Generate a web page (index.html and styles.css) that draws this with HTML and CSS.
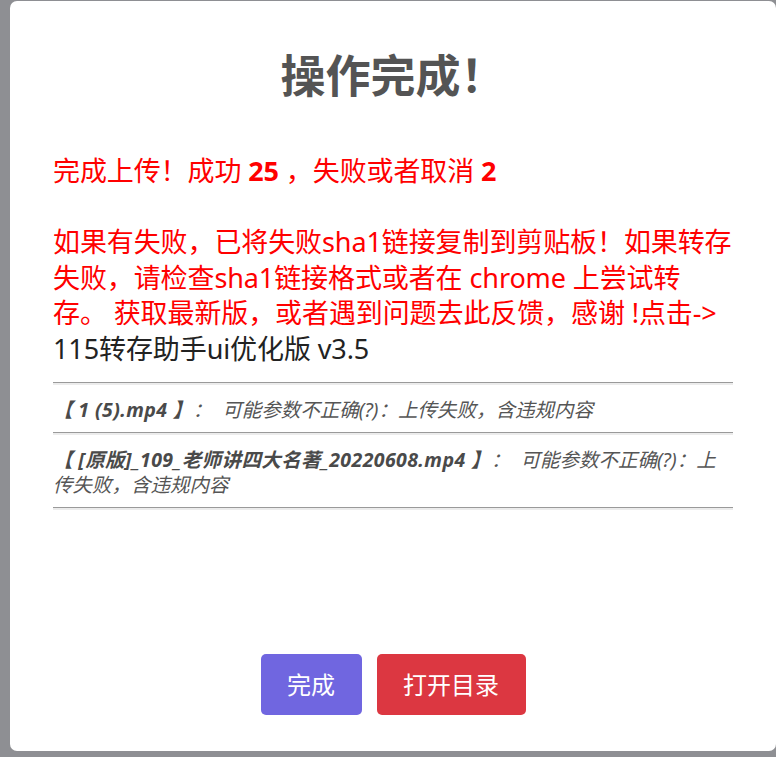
FILE: index.html
```html
<!DOCTYPE html>
<html lang="zh-CN">
<head>
<meta charset="utf-8">
<title>操作完成</title>
<link rel="stylesheet" href="styles.css">
</head>
<body>
<div class="popup">
  <h2 class="title">操作完成！</h2>
  <div class="content">
    <p class="msg">完成上传！成功 <b>25</b> ，失败或者取消 <b>2</b><br><br>如果有失败，已将失败sha1链接复制到剪贴板！如果转存失败，请检查sha1链接格式或者在 chrome 上尝试转存。 获取最新版，或者遇到问题去此反馈，感谢 !点击-&gt; <a class="link" href="#">115转存助手ui优化版 v3.5</a></p>
    <hr class="sep">
    <div class="item"><b>【 1 (5).mp4 】</b>：<span class="reason">可能参数不正确(?)：上传失败，含违规内容</span></div>
    <hr class="sep">
    <div class="item"><b>【 [原版]_109_老师讲四大名著_20220608.mp4 】</b>：<span class="reason">可能参数不正确(?)：上传失败，含违规内容</span></div>
    <hr class="sep">
  </div>
  <div class="actions">
    <button class="btn btn-confirm">完成</button>
    <button class="btn btn-deny">打开目录</button>
  </div>
</div>
</body>
</html>
```
FILE: styles.css
```css
html, body {
  margin: 0;
  padding: 0;
}
body {
  background: #8e8f93;
  height: 757px;
  overflow: hidden;
  font-family: "Noto Sans", "Noto Sans CJK SC", sans-serif;
}
.popup {
  box-sizing: border-box;
  margin: 1px 0 0 10px;
  width: 766px;
  height: 750px;
  background: #fff;
  border-radius: 7px;
  display: flex;
  flex-direction: column;
  padding-bottom: 36px;
}
.title {
  margin: 0;
  padding-top: 48px;
  font-size: 45px;
  line-height: 54px;
  font-weight: 700;
  color: #545454;
  text-align: center;
}
.content {
  padding: 0 43px;
  margin-top: 50px;
}
.msg {
  margin: 0;
  color: #ff0000;
  font-size: 27px;
  line-height: 35.6px;
  letter-spacing: -0.1px;
}
.msg b {
  font-weight: 700;
}
.link {
  color: #222;
  text-decoration: none;
}
.sep {
  margin: 0;
  height: 0;
  border: 0;
  border-top: 1px solid #9a9a9a;
  border-bottom: 2px solid #ececec;
}
.msg + .sep {
  margin-top: 15px;
}
.item {
  padding: 12px 0 10px;
  font-size: 19.5px;
  line-height: 25px;
  font-style: italic;
  color: #555;
}
.item b {
  font-weight: 700;
  color: #4a4a4a;
  letter-spacing: 0.4px;
}
.reason {
  margin-left: 10px;
}
.actions {
  margin-top: auto;
  display: flex;
  justify-content: center;
  gap: 15px;
}
.btn {
  border: 0;
  border-radius: 5px;
  padding: 16px 26.5px;
  font-family: "Noto Sans", "Noto Sans CJK SC", sans-serif;
  font-size: 24px;
  line-height: 29px;
  color: #fff;
  cursor: pointer;
}
.btn-confirm {
  background: #7066e0;
}
.btn-deny {
  background: #dc3741;
}
```
